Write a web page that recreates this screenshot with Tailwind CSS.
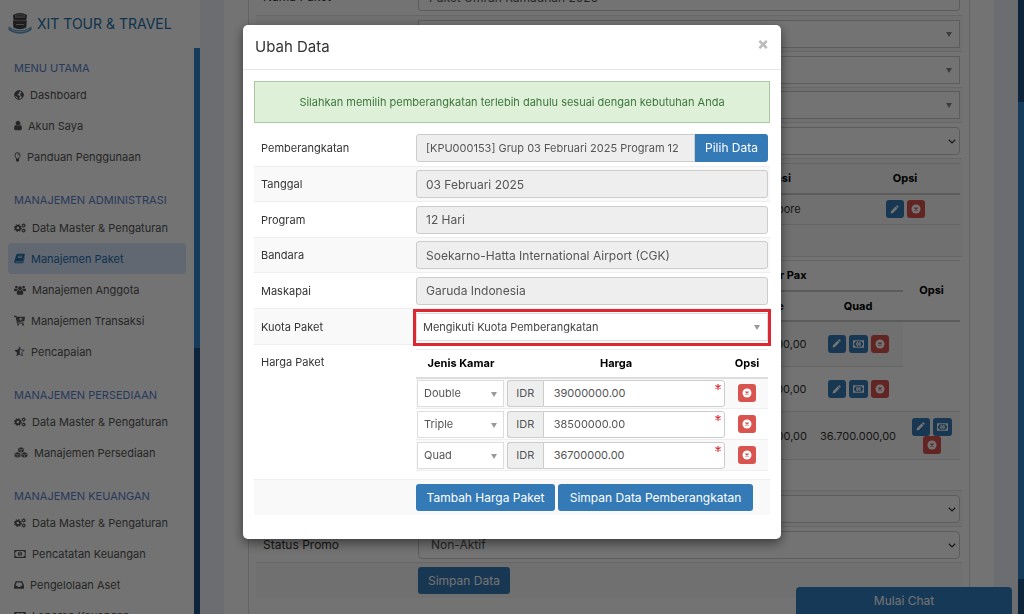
<!DOCTYPE html>
<html lang="id">
<head>
<meta charset="utf-8">
<meta name="viewport" content="width=device-width, initial-scale=1">
<title>XIT Tour &amp; Travel - Ubah Data</title>
<script src="https://cdn.jsdelivr.net/npm/@tailwindcss/browser@4"></script>
</head>
<body class="h-screen overflow-hidden bg-[#eef1f8] font-[Inter,sans-serif] text-[11px] leading-4 text-[#333]">

<svg class="hidden" aria-hidden="true">
  <symbol id="globe" viewBox="0 0 16 16"><circle cx="8" cy="8" r="7" fill="none" stroke="currentColor" stroke-width="1.6"/><path fill="currentColor" d="M1.500 5 5 1.500l4-.5 1 1.500-2 1.500.5 1.500-2 1-1 1.500 3 .8 1.500 1.700-1.500 2-.5 2.500-2-1-1-3L1.500 9zM10 6l2-2.500 2 1 1 3.500-1.500 3.500-1.500.5-.5-2.500-1.500-1z"/></symbol>
  <symbol id="user" viewBox="256 0 1280 1792"><path fill="currentColor" d="M1536 1399q0 109-62.500 187t-150.500 78h-854q-88 0-150.500-78t-62.500-187q0-85 8.500-160.500t31.500-152 58.500-131 94-89 134.500-34.500q131 128 313 128t313-128q76 0 134.500 34.500t94 89 58.500 131 31.500 152 8.500 160.500zm-256-887q0 159-112.500 271.500t-271.500 112.500-271.500-112.500-112.500-271.500 112.500-271.500 271.500-112.500 271.500 112.500 112.500 271.500z"/></symbol>
  <symbol id="bulb" viewBox="0 0 10 16"><path fill="none" stroke="currentColor" stroke-width="1.500" d="M3.200 11C3.200 9 1 8 1 5a4 4 0 0 1 8 0c0 3-2.200 4-2.200 6z"/><path fill="none" stroke="currentColor" stroke-width="1.300" d="M5 3.200a1.800 1.800 0 0 1 1.800 1.800"/><path fill="currentColor" d="M2.600 11h4.800v3L6 15.500H4L2.600 14z"/></symbol>
  <symbol id="gears" viewBox="0 0 20 16"><circle cx="6.500" cy="8" r="3.700" fill="none" stroke="currentColor" stroke-width="3"/><circle cx="6.500" cy="8" r="5.600" fill="none" stroke="currentColor" stroke-width="2" stroke-dasharray="2.200 2.200"/><circle cx="16" cy="3.800" r="2" fill="none" stroke="currentColor" stroke-width="1.700"/><circle cx="16" cy="3.800" r="3.200" fill="none" stroke="currentColor" stroke-width="1" stroke-dasharray="1.670 1.670"/><circle cx="16" cy="12.200" r="2" fill="none" stroke="currentColor" stroke-width="1.700"/><circle cx="16" cy="12.200" r="3.200" fill="none" stroke="currentColor" stroke-width="1" stroke-dasharray="1.670 1.670"/></symbol>
  <symbol id="book" viewBox="0 0 16 16"><path fill="currentColor" fill-rule="evenodd" d="M5.500 1H15q1 .3.700 1.500L13 11.500q-.4 1-1.500 1H3q-1 .2-.8 1h9.600q1 0 1.300-1L15.800 5v1.500L13.500 14q-.5 1-1.700 1H2.500Q.4 15 .3 12.700L3.400 2.600Q4 1 5.500 1zM6 4l-.3 1h6.500l.3-1zm-.7 2.300-.3 1h6.500l.3-1z"/></symbol>
  <symbol id="users" viewBox="0 0 20 16"><g fill="currentColor"><circle cx="10" cy="5" r="3.200"/><path d="M4.500 13.500C4.500 10 5.500 8.200 7.300 8q2.700 1.700 5.400 0c1.800.2 2.800 2 2.800 5.500Q15.500 16 13 16H7q-2.500 0-2.500-2.500z"/><circle cx="4" cy="3" r="2.200"/><circle cx="16" cy="3" r="2.200"/><path d="M0 8.500C0 6.500.8 5.400 1.800 5.400q1.800 1.200 4 .2 0 1 .7 1.900Q4.500 8 4 10H2Q0 10 0 8.500zM20 8.500c0-2-.8-3.100-1.800-3.100q-1.800 1.200-4 .2 0 1-.7 1.900 2 .5 2.500 2.500h2q2 0 2-1.500z"/></g></symbol>
  <symbol id="cart" viewBox="0 0 16 16"><path fill="none" stroke="currentColor" stroke-width="1.500" d="M0 2h3l2 9.500h9"/><path fill="currentColor" fill-rule="evenodd" d="M4 2.500h12l-1 6.500-10 1zm5.200 1v1.700H7.400v1.300h1.800V8h1.300V6.500h1.800V5.200h-1.800V3.500z"/><circle cx="6" cy="14" r="1.400" fill="currentColor"/><circle cx="13" cy="14" r="1.400" fill="currentColor"/></symbol>
  <symbol id="star" viewBox="0 0 16 16"><path fill="none" stroke="currentColor" stroke-width="1.200" stroke-linejoin="round" d="m8 1.200 2.100 4.300 4.800.7-3.500 3.300.9 4.800L8 12"/><path fill="currentColor" d="M8.400.5v11.800l-4.900 2.600.9-5.200L.5 6l5.300-.8z"/></symbol>
  <symbol id="cubes" viewBox="0 0 20 16"><g fill="currentColor" stroke="#fff" stroke-width=".7"><path d="m10 0 4.500 1.900v4.800L10 8.800 5.500 6.700V1.900z"/><path d="m5 7.200 4.700 2v4.700L5 16 .3 13.900V9.200z"/><path d="m15 7.200 4.700 2v4.700L15 16l-4.700-2.100V9.200z"/></g><path fill="none" stroke="#fff" stroke-width=".9" d="m6.300 2.700 3.700 1.600 3.700-1.600M10 4.500V8M1 10l4 1.700L8.700 10M5 12v3.500M11.300 10l3.700 1.700L19 10M15 12v3.500"/></symbol>
  <symbol id="money" viewBox="0 0 20 14"><path fill="currentColor" fill-rule="evenodd" d="M0 0h20v14H0zM4 1.600Q4 4 1.600 4v6Q4 10 4 12.400h12Q16 10 18.400 10V4Q16 4 16 1.600z"/><ellipse cx="10" cy="7" rx="3.600" ry="4.300" fill="currentColor"/><path stroke="#fff" stroke-width="1.200" d="M8.500 5.500 10.200 4v5M8.500 9.500h3.300" fill="none"/></symbol>
  <symbol id="cash" viewBox="0 0 20 14"><path fill="currentColor" fill-rule="evenodd" d="M0 0h20v14H0zM4.500 2Q4.500 4.500 2 4.500v5q2.500 0 2.500 2.500h11q0-2.500 2.500-2.500v-5q-2.500 0-2.500-2.500z"/><path fill="none" stroke="currentColor" stroke-width="2.400" d="M8.200 3.400Q5.500 7 8.200 10.600M11.800 3.400Q14.500 7 11.800 10.600"/><path stroke="currentColor" stroke-width="1.400" d="M10 4.500v5"/></symbol>
  <symbol id="inbox" viewBox="0 0 16 16"><path fill="currentColor" fill-rule="evenodd" d="M3.500 2h9q1 0 1.300.8L16 9v4.200q0 .8-.8.800H.8Q0 14 0 13.200V9l2.200-6.200Q2.500 2 3.500 2zm.7 2L2.400 9h2.800l1 2h3.600l1-2h2.800l-1.800-5z"/></symbol>
  <symbol id="pencil" viewBox="0 0 12 12"><path fill="currentColor" d="M.6 11.400 1.500 8 7.400 2.100 9.900 4.600 4 10.500zM8 1.500 8.900.6q.7-.5 1.400.1l1 1q.6.700 0 1.400l-.8.900z"/></symbol>
  <symbol id="remove" viewBox="0 0 10 10"><circle cx="5" cy="5" r="4.500" fill="currentColor"/><path fill="none" stroke="#d9534f" stroke-width="1.300" d="m3.500 3.500 3 3M6.500 3.500l-3 3"/></symbol>
  <symbol id="asterisk" viewBox="0 0 12 12"><path fill="none" stroke="currentColor" stroke-width="2.200" d="M6 0v12M.8 3l10.400 6M.8 9l10.400-6"/></symbol>
  <symbol id="caret" viewBox="0 0 10 8"><path fill="currentColor" d="M0 0h10L5 8z"/></symbol>
  <symbol id="chevron" viewBox="0 0 10 6"><path fill="none" stroke="currentColor" stroke-width="1.500" d="m1 .8 4 4 4-4"/></symbol>
</svg>

<div class="flex h-full">
  <aside class="flex w-[200px] shrink-0 flex-col bg-white">
    <a href="#" class="flex h-12 shrink-0 items-center gap-[5px] pl-2 text-[14px] text-[#2470ac]">
      <svg class="size-6" viewBox="0 0 24 24" aria-hidden="true">
        <path fill="#444" d="M5 3q7-4 14 0l-.5 4-.5 1 .8 1-.5 6.500q-6.500 3.500-13 0L5 9l.7-1L5.300 7z"/>
        <path fill="#999" d="M5.500 7.700q6.500 1.500 13 0v.8q-6.500 1.500-13 0z"/>
        <path fill="none" stroke="#bbb" stroke-width=".8" d="M7 5h10M8 12.500h8"/>
        <path fill="none" stroke="#999" stroke-width=".8" d="M7 3.500q5-2 10 0"/>
        <path fill="#5e9fd0" d="M.5 14.500 4 16.500q8 3.500 16 0l3.500-2V18Q12 25.500.5 18z"/>
        <path fill="#cfe2f2" d="M3 17q9 4.500 18 0v.8q-9 4.500-18 0z"/>
      </svg>
      XIT TOUR &amp; TRAVEL
    </a>
    <div class="flex min-h-0 grow">
      <nav class="min-w-0 grow overflow-hidden pl-2 pr-2 text-[#555]">
        <h2 class="h-[31px] pl-[6px] pt-2 leading-6 text-[#5a7fcc]">MENU UTAMA</h2>
        <a href="#" class="flex h-[31px] items-center gap-[6px] pl-[6px]"><svg class="size-[10px]"><use href="#globe"/></svg>Dashboard</a>
        <a href="#" class="flex h-[31px] items-center gap-[6px] pl-[6px]"><svg class="h-[11px] w-2"><use href="#user"/></svg>Akun Saya</a>
        <a href="#" class="flex h-[31px] items-center gap-[6px] pl-[6px]"><svg class="h-[10px] w-[7px]"><use href="#bulb"/></svg>Panduan Penggunaan</a>
        <h2 class="pl-[6px] pt-4 leading-6 text-[#5a7fcc]">MANAJEMEN ADMINISTRASI</h2>
        <a href="#" class="flex h-[31px] items-center gap-[6px] pl-[6px]"><svg class="h-[10px] w-3"><use href="#gears"/></svg>Data Master &amp; Pengaturan</a>
        <a href="#" class="flex h-[31px] items-center gap-[6px] rounded bg-[#d8e6fb] pl-[6px] text-[#2470ac]"><svg class="size-[11px]"><use href="#book"/></svg>Manajemen Paket</a>
        <a href="#" class="flex h-[31px] items-center gap-[6px] pl-[6px]"><svg class="h-[10px] w-3"><use href="#users"/></svg>Manajemen Anggota</a>
        <a href="#" class="flex h-[31px] items-center gap-[6px] pl-[6px]"><svg class="size-[11px]"><use href="#cart"/></svg>Manajemen Transaksi</a>
        <a href="#" class="flex h-[31px] items-center gap-[6px] pl-[6px]"><svg class="size-[11px]"><use href="#star"/></svg>Pencapaian</a>
        <h2 class="h-[39px] pl-[6px] pt-4 leading-6 text-[#5a7fcc]">MANAJEMEN PERSEDIAAN</h2>
        <a href="#" class="flex h-[31px] items-center gap-[6px] pl-[6px]"><svg class="h-[10px] w-3"><use href="#gears"/></svg>Data Master &amp; Pengaturan</a>
        <a href="#" class="flex h-[31px] items-center gap-[6px] pl-[6px]"><svg class="h-[11px] w-[14px]"><use href="#cubes"/></svg>Manajemen Persediaan</a>
        <h2 class="h-[39px] pl-[6px] pt-4 leading-6 text-[#5a7fcc]">MANAJEMEN KEUANGAN</h2>
        <a href="#" class="flex h-[31px] items-center gap-[6px] pl-[6px]"><svg class="h-[10px] w-3"><use href="#gears"/></svg>Data Master &amp; Pengaturan</a>
        <a href="#" class="flex h-[31px] items-center gap-[6px] pl-[6px]"><svg class="h-2 w-3"><use href="#money"/></svg>Pencatatan Keuangan</a>
        <a href="#" class="flex h-[31px] items-center gap-[6px] pl-[6px]"><svg class="size-[10px]"><use href="#inbox"/></svg>Pengelolaan Aset</a>
        <a href="#" class="flex h-[31px] items-center gap-[6px] pl-[6px]"><svg class="h-2 w-3"><use href="#money"/></svg>Laporan Keuangan</a>
      </nav>
      <div class="w-[6px] shrink-0 bg-[#1d5380]"><div class="h-[300px] bg-[#2f85cb]"></div></div>
    </div>
  </aside>

  <main class="min-w-0 grow overflow-hidden px-6">
    <div class="h-full bg-white px-6">
      <div class="flex h-full flex-col border-x border-[#ddd] px-[7px]">
        <div class="-mt-[21px]">
          <div class="grid h-9 grid-cols-[162px_1fr] items-center pr-[2px]">
            <label for="nama" class="pl-[7px] text-[12px]">Nama Paket</label>
            <input id="nama" value="Paket Umrah Ramadhan 2025" class="h-7 min-w-0 rounded-[3px] border border-[#ccc] px-[10px] text-[12px] text-[#555]">
          </div>
          <div class="grid h-9 grid-cols-[162px_1fr] items-center border-t border-[#e5e5e5] bg-[#f9f9f9] pr-[2px]">
            <label for="jenis" class="pl-[7px]">Jenis Paket</label>
            <div class="relative"><select id="jenis" class="block h-7 w-full appearance-none border border-[#ccc] bg-white px-[6px]"><option>Umrah</option></select><svg class="pointer-events-none absolute right-2 top-3 h-[5px] w-[6px] text-[#888]"><use href="#caret"/></svg></div>
          </div>
          <div class="grid h-9 grid-cols-[162px_1fr] items-center border-t border-[#e5e5e5] pr-[2px]">
            <label for="kategori" class="pl-[7px]">Kategori</label>
            <div class="relative"><select id="kategori" class="block h-7 w-full appearance-none border border-[#ccc] bg-white px-[6px]"><option>Reguler</option></select><svg class="pointer-events-none absolute right-2 top-3 h-[5px] w-[6px] text-[#888]"><use href="#caret"/></svg></div>
          </div>
          <div class="grid h-[35px] grid-cols-[162px_1fr] items-center border-t border-[#e5e5e5] bg-[#f9f9f9] pr-[2px]">
            <label for="program2" class="pl-[7px]">Program</label>
            <div class="relative"><select id="program2" class="block h-7 w-full appearance-none border border-[#ccc] bg-white px-[6px]"><option>12 Hari</option></select><svg class="pointer-events-none absolute right-2 top-3 h-[5px] w-[6px] text-[#888]"><use href="#caret"/></svg></div>
          </div>
          <div class="grid h-9 grid-cols-[162px_1fr] items-center border-t border-[#e5e5e5] pr-[2px]">
            <label for="plus" class="pl-[7px]">Paket Plus</label>
            <div class="relative"><select id="plus" class="block h-7 w-full appearance-none rounded-[4px] border border-[#ccc] bg-white px-[10px]"><option>Ya</option></select><svg class="pointer-events-none absolute right-1 top-3 h-[5px] w-2"><use href="#chevron"/></svg></div>
          </div>
          <div class="grid grid-cols-[162px_1fr] border-t border-[#e5e5e5] bg-[#f9f9f9] pb-[31px] pr-[2px] pt-1">
            <span class="pl-[7px] pt-2">Destinasi</span>
            <table class="w-full table-fixed border-collapse border-t border-[#ddd] text-center">
              <colgroup><col><col class="w-[168px]"><col class="w-[110px]"></colgroup>
              <thead><tr class="h-[30px] border-b-2 border-[#ccc] text-black"><th class="font-bold">No</th><th class="font-bold">Destinasi</th><th class="font-bold">Opsi</th></tr></thead>
              <tbody><tr class="h-[31px] border-b border-[#ddd]"><td>1</td><td>Ke Singapore</td><td>
                <div class="flex justify-center gap-[3px] text-white">
                  <button aria-label="Ubah" class="flex size-[18px] items-center justify-center rounded-[3px] bg-[#337ab7]"><svg class="size-[9px]"><use href="#pencil"/></svg></button>
                  <button aria-label="Hapus" class="flex size-[18px] items-center justify-center rounded-[3px] bg-[#d9534f]"><svg class="size-[10px]"><use href="#remove"/></svg></button>
                </div></td></tr></tbody>
            </table>
          </div>
          <div class="grid grid-cols-[162px_1fr] border-t border-[#e5e5e5] pb-[30px] pr-[2px] pt-[3px]">
            <span class="pl-[7px] pt-2">Data Paket</span>
            <table class="w-full table-fixed border-collapse border-t border-[#ddd] text-center">
              <colgroup><col><col class="w-[89px]"><col class="w-[89px]"><col class="w-[90px]"><col class="w-[57px]"></colgroup>
              <thead class="text-black">
                <tr class="h-[30px]"><th rowspan="2" class="border-b-2 border-[#ccc] font-bold">Pemberangkatan</th><th colspan="3" class="border-b-2 border-[#ccc] font-bold">Harga Per Pax</th><th rowspan="2" class="border-b-2 border-[#ccc] font-bold">Opsi</th></tr>
                <tr class="h-[30px]"><th class="border-b-2 border-[#ccc] font-bold">Double</th><th class="border-b-2 border-[#ccc] font-bold">Triple</th><th class="border-b-2 border-[#ccc] font-bold">Quad</th></tr>
              </thead>
              <tbody>
                <tr class="h-[46px]"><td class="border-b border-[#ddd] bg-[#f9f9f9]">Januari 2025</td><td class="border-b border-[#ddd] bg-[#f9f9f9]">38.500.000,00</td><td class="border-b border-[#ddd] bg-[#f9f9f9]">36.700.000,00</td><td class="border-b border-[#ddd] bg-[#f9f9f9]">
                  <div class="flex justify-center gap-[3px] text-white">
                    <button aria-label="Ubah" class="flex size-[18px] items-center justify-center rounded-[3px] bg-[#337ab7]"><svg class="size-[9px]"><use href="#pencil"/></svg></button>
                    <button aria-label="Harga" class="flex h-[18px] w-[19px] items-center justify-center rounded-[3px] bg-[#337ab7]"><svg class="h-2 w-[11px]"><use href="#cash"/></svg></button>
                    <button aria-label="Hapus" class="flex size-[18px] items-center justify-center rounded-[3px] bg-[#d9534f]"><svg class="size-[10px]"><use href="#remove"/></svg></button>
                  </div></td></tr>
                <tr class="h-[45px] border-b border-[#ddd]"><td>Februari 2025</td><td>38.500.000,00</td><td>36.700.000,00</td><td>
                  <div class="flex justify-center gap-[3px] text-white">
                    <button aria-label="Ubah" class="flex size-[18px] items-center justify-center rounded-[3px] bg-[#337ab7]"><svg class="size-[9px]"><use href="#pencil"/></svg></button>
                    <button aria-label="Harga" class="flex h-[18px] w-[19px] items-center justify-center rounded-[3px] bg-[#337ab7]"><svg class="h-2 w-[11px]"><use href="#cash"/></svg></button>
                    <button aria-label="Hapus" class="flex size-[18px] items-center justify-center rounded-[3px] bg-[#d9534f]"><svg class="size-[10px]"><use href="#remove"/></svg></button>
                  </div></td><td></td></tr>
                <tr class="h-12 border-b border-[#ddd] bg-[#f9f9f9]"><td>Maret 2025</td><td>39.000.000,00</td><td>38.500.000,00</td><td>36.700.000,00</td><td>
                  <div class="flex flex-wrap justify-center gap-x-[3px] text-white">
                    <button aria-label="Ubah" class="flex size-[18px] items-center justify-center rounded-[3px] bg-[#337ab7]"><svg class="size-[9px]"><use href="#pencil"/></svg></button>
                    <button aria-label="Harga" class="flex h-[18px] w-[19px] items-center justify-center rounded-[3px] bg-[#337ab7]"><svg class="h-2 w-[11px]"><use href="#cash"/></svg></button>
                    <button aria-label="Hapus" class="flex size-[18px] items-center justify-center rounded-[3px] bg-[#d9534f]"><svg class="size-[10px]"><use href="#remove"/></svg></button>
                  </div></td></tr>
              </tbody>
            </table>
          </div>
          <div class="grid h-9 grid-cols-[162px_1fr] items-center border-t border-[#e5e5e5] bg-[#f9f9f9] pr-[2px]">
            <label for="tampil" class="pl-[7px] text-[12px]">Status Tampil</label>
            <div class="relative"><select id="tampil" class="block h-7 w-full appearance-none rounded-[4px] border border-[#ccc] bg-white px-3 text-[12px] text-[#555]"><option>Aktif</option></select><svg class="pointer-events-none absolute right-1 top-3 h-[5px] w-2"><use href="#chevron"/></svg></div>
          </div>
          <div class="grid h-9 grid-cols-[162px_1fr] items-center border-t border-[#e5e5e5] pr-[2px]">
            <label for="promo" class="pl-[7px] text-[12px]">Status Promo</label>
            <div class="relative"><select id="promo" class="block h-7 w-full appearance-none rounded-[4px] border border-[#ccc] bg-white px-3 text-[12px] text-[#555]"><option>Non-Aktif</option></select><svg class="pointer-events-none absolute right-1 top-3 h-[5px] w-2"><use href="#chevron"/></svg></div>
          </div>
          <div class="grid h-9 grid-cols-[162px_1fr] items-center border-t border-[#e5e5e5] bg-[#f9f9f9]">
            <span></span>
            <button class="h-[27px] justify-self-start rounded-[3px] bg-[#337ab7] px-[10px] text-[12px] text-white">Simpan Data</button>
          </div>
        </div>
      </div>
    </div>
  </main>
  <div class="flex w-[6px] shrink-0 flex-col bg-[#1d5380] pb-[35px] pt-[102px]"><div class="grow bg-[#2f85cb]"></div></div>
</div>

<button class="fixed bottom-0 right-3 h-[27px] w-[216px] rounded-t bg-[#2f7fc1] text-[12px] text-white">Mulai Chat</button>

<div class="fixed inset-0 flex items-start justify-center bg-black/55 pt-[25px]">
  <section role="dialog" aria-labelledby="judul" class="w-full max-w-[538px] rounded-[5px] bg-white pb-6 shadow-[0_4px_12px_rgba(0,0,0,0.5)]">
    <header class="flex h-[45px] items-center justify-between border-b border-[#e5e5e5] px-3">
      <h1 id="judul" class="text-[15px]">Ubah Data</h1>
      <button aria-label="Tutup" class="pb-2 text-[17px] font-extrabold text-[#bbb]">×</button>
    </header>
    <div class="px-[11px] pt-[11px]">
      <p class="flex h-[42px] items-center justify-center border border-[#a9c9a4] bg-[#dff0d8] text-[#3c763d]">Silahkan memilih pemberangkatan terlebih dahulu sesuai dengan kebutuhan Anda</p>
      <form class="pt-[7px]">
        <div class="grid h-9 grid-cols-[162px_1fr] items-center pr-[2px]">
          <label for="berangkat" class="pl-[7px]">Pemberangkatan</label>
          <div class="flex">
            <input id="berangkat" readonly value="[KPU000153] Grup 03 Februari 2025 Program 12" class="h-7 min-w-0 grow rounded-l-[3px] border border-[#ccc] bg-[#eee] px-[9px] text-[#555]">
            <button type="button" class="h-7 w-[73px] shrink-0 rounded-r-[3px] bg-[#337ab7] text-[12px] text-white">Pilih Data</button>
          </div>
        </div>
        <div class="grid h-[35px] grid-cols-[162px_1fr] items-center border-t border-[#eee] bg-[#f9f9f9] pr-[2px]">
          <label for="tanggal" class="pl-[7px]">Tanggal</label>
          <input id="tanggal" readonly value="03 Februari 2025" class="h-7 min-w-0 rounded-[3px] border border-[#ccc] bg-[#eee] px-[9px] text-[12px] text-[#555]">
        </div>
        <div class="grid h-9 grid-cols-[162px_1fr] items-center border-t border-[#eee] pr-[2px]">
          <label for="program" class="pl-[7px]">Program</label>
          <input id="program" readonly value="12 Hari" class="h-7 min-w-0 rounded-[3px] border border-[#ccc] bg-[#eee] px-[9px] text-[12px] text-[#555]">
        </div>
        <div class="grid h-[35px] grid-cols-[162px_1fr] items-center border-t border-[#eee] bg-[#f9f9f9] pr-[2px]">
          <label for="bandara" class="pl-[7px]">Bandara</label>
          <input id="bandara" readonly value="Soekarno-Hatta International Airport (CGK)" class="h-7 min-w-0 rounded-[3px] border border-[#ccc] bg-[#eee] px-[9px] text-[12px] text-[#555]">
        </div>
        <div class="grid h-9 grid-cols-[162px_1fr] items-center border-t border-[#eee] pr-[2px]">
          <label for="maskapai" class="pl-[7px]">Maskapai</label>
          <input id="maskapai" readonly value="Garuda Indonesia" class="h-7 min-w-0 rounded-[3px] border border-[#ccc] bg-[#eee] px-[9px] text-[12px] text-[#555]">
        </div>
        <div class="grid h-9 grid-cols-[162px_1fr] items-center border-t border-[#eee] bg-[#f9f9f9] pr-[2px]">
          <label for="kuota" class="pl-[7px]">Kuota Paket</label>
          <div class="relative">
            <select id="kuota" class="block h-7 w-full appearance-none border border-[#ddd] bg-white px-[6px] text-[#444]"><option>Mengikuti Kuota Pemberangkatan</option></select>
            <svg class="pointer-events-none absolute right-2 top-3 h-[5px] w-[6px] text-[#999]"><use href="#caret"/></svg>
            <div class="pointer-events-none absolute -bottom-[5px] -left-[3px] -right-[3px] -top-1 border-3 border-[#dc2832]"></div>
          </div>
        </div>
        <div class="grid grid-cols-[162px_1fr] border-t border-[#eee] pb-2 pr-[2px] pt-1">
          <span class="pl-[7px] pt-[5px]">Harga Paket</span>
          <table class="w-full table-fixed border-collapse border-t border-[#eee]">
            <colgroup><col class="w-[90px]"><col><col class="w-[42px]"></colgroup>
            <thead><tr class="h-[28px] border-b-2 border-[#ddd] text-black"><th class="font-bold">Jenis Kamar</th><th class="font-bold">Harga</th><th class="font-bold">Opsi</th></tr></thead>
            <tbody>
              <tr class="h-[31px] bg-[#f9f9f9]">
                <td class="px-px"><div class="relative"><select aria-label="Jenis kamar 1" class="block h-[27px] w-[87px] appearance-none border border-[#ddd] bg-white px-[6px] text-[#555]"><option>Double</option></select><svg class="pointer-events-none absolute right-2 top-3 h-[5px] w-[6px] text-[#999]"><use href="#caret"/></svg></div></td>
                <td class="px-px"><div class="relative flex"><span class="flex h-[27px] w-[38px] items-center justify-center rounded-l-[3px] border border-r-0 border-[#ccc] bg-[#eee] text-[#555]">IDR</span><input aria-label="Harga Double" value="39000000.00" class="h-[27px] min-w-0 grow rounded-r-[3px] border border-[#ccc] bg-white px-[10px] text-[#555]"><svg class="absolute right-1 top-1 size-[6px] text-[#e0282e]"><use href="#asterisk"/></svg></div></td>
                <td><button type="button" aria-label="Hapus Double" class="mx-auto flex size-[18px] items-center justify-center rounded-[3px] bg-[#d9534f] text-white"><svg class="size-[10px]"><use href="#remove"/></svg></button></td>
              </tr>
              <tr class="h-[31px] border-t border-[#eee]">
                <td class="px-px"><div class="relative"><select aria-label="Jenis kamar 2" class="block h-[27px] w-[87px] appearance-none border border-[#ddd] bg-white px-[6px] text-[#555]"><option>Triple</option></select><svg class="pointer-events-none absolute right-2 top-3 h-[5px] w-[6px] text-[#999]"><use href="#caret"/></svg></div></td>
                <td class="px-px"><div class="relative flex"><span class="flex h-[27px] w-[38px] items-center justify-center rounded-l-[3px] border border-r-0 border-[#ccc] bg-[#eee] text-[#555]">IDR</span><input aria-label="Harga Triple" value="38500000.00" class="h-[27px] min-w-0 grow rounded-r-[3px] border border-[#ccc] bg-white px-[10px] text-[#555]"><svg class="absolute right-1 top-1 size-[6px] text-[#e0282e]"><use href="#asterisk"/></svg></div></td>
                <td><button type="button" aria-label="Hapus Triple" class="mx-auto flex size-[18px] items-center justify-center rounded-[3px] bg-[#d9534f] text-white"><svg class="size-[10px]"><use href="#remove"/></svg></button></td>
              </tr>
              <tr class="h-[31px] border-y border-[#eee] bg-[#f9f9f9]">
                <td class="px-px"><div class="relative"><select aria-label="Jenis kamar 3" class="block h-[27px] w-[87px] appearance-none border border-[#ddd] bg-white px-[6px] text-[#555]"><option>Quad</option></select><svg class="pointer-events-none absolute right-2 top-3 h-[5px] w-[6px] text-[#999]"><use href="#caret"/></svg></div></td>
                <td class="px-px"><div class="relative flex"><span class="flex h-[27px] w-[38px] items-center justify-center rounded-l-[3px] border border-r-0 border-[#ccc] bg-[#eee] text-[#555]">IDR</span><input aria-label="Harga Quad" value="36700000.00" class="h-[27px] min-w-0 grow rounded-r-[3px] border border-[#ccc] bg-white px-[10px] text-[#555]"><svg class="absolute right-1 top-1 size-[6px] text-[#e0282e]"><use href="#asterisk"/></svg></div></td>
                <td><button type="button" aria-label="Hapus Quad" class="mx-auto flex size-[18px] items-center justify-center rounded-[3px] bg-[#d9534f] text-white"><svg class="size-[10px]"><use href="#remove"/></svg></button></td>
              </tr>
            </tbody>
          </table>
        </div>
        <div class="flex h-9 items-center gap-[3px] border-t border-[#eee] bg-[#f9f9f9] pl-[162px]">
          <button type="button" class="h-[27px] w-[139px] rounded-[3px] bg-[#337ab7] text-[12px] text-white">Tambah Harga Paket</button>
          <button type="button" class="h-[27px] w-[195px] rounded-[3px] bg-[#337ab7] text-[12px] text-white">Simpan Data Pemberangkatan</button>
        </div>
      </form>
    </div>
  </section>
</div>
</body>
</html>
